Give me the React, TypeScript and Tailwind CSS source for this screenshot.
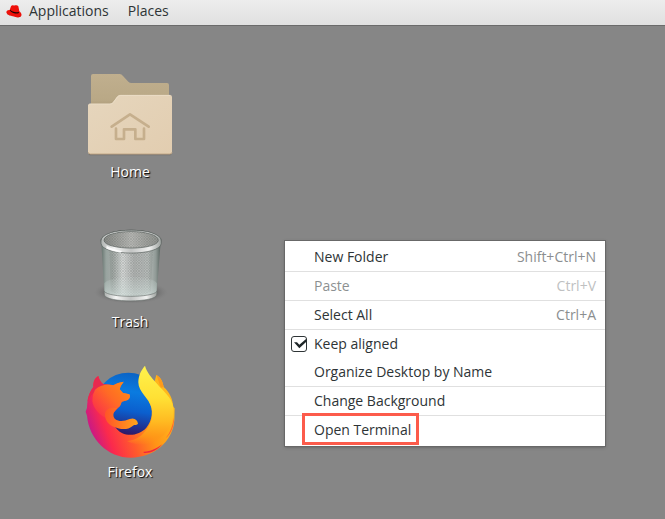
import { useState, type ReactNode } from "react";

function HatLogo() {
  return (
    <svg className="h-4 w-4" viewBox="0 0 48 48" aria-hidden="true">
      <path d="M1 27c1-5 6-7 10-6l4-11c2-4 6-4 9-2 4-2 11-1 13 2l3 15c5 4 8 9 6 13-3 6-14 6-25 2C11 37 1 34 1 27z" fill="#ee1009" />
      <path d="M12 22c2 7 18 13 27 8l-1-4c-7 4-21 0-25-6z" fill="#1c0503" />
      <path d="M3 31c9 9 29 15 42 7-5 6-16 5-25 2C10 38 4 35 3 31z" fill="#b80c08" />
    </svg>
  );
}

function FolderIcon() {
  return (
    <svg className="h-[100px] w-[110px]" viewBox="0 0 330 300" aria-hidden="true">
      <defs>
        <linearGradient id="folderBack" x1="0" y1="0" x2="0" y2="1">
          <stop offset="0" stopColor="#c0af8e" />
          <stop offset="0.7" stopColor="#b9a886" />
          <stop offset="1" stopColor="#a08e6c" />
        </linearGradient>
        <linearGradient id="folderFront" x1="0" y1="0" x2="1" y2="1">
          <stop offset="0" stopColor="#e6d6bd" />
          <stop offset="1" stopColor="#e2cdb0" />
        </linearGradient>
      </defs>
      <path d="M41 279h248v3q0 4-5 4H46q-5 0-5-4z" fill="#5f5d59" opacity=".6" />
      <path d="M48 48q0-6 6-6h80q6 0 10 6l16 17q4 4 9 4h107q6 0 6 6v80H48z" fill="url(#folderBack)" />
      <path d="M39 136q0-5 5-5h60q7 0 11-6l11-15q4-5 10-5h149q6 0 6 6v165q0 6-6 6H45q-6 0-6-6z" fill="url(#folderFront)" />
      <path d="M40 277q1 5 6 5h239q5 0 6-5" fill="none" stroke="#c3a887" strokeWidth="3" />
      <path d="M43 132h62q7 0 11-6l11-15q4-5 10-5h149" fill="none" stroke="#efe2cd" strokeWidth="2" />
      <path d="M110 200l55-37 56 37M123 206v31h24v-29h34v29h26v-31" fill="none" stroke="#c6af8d" strokeWidth="8" strokeLinecap="round" strokeLinejoin="round" />
    </svg>
  );
}

function TrashIcon() {
  return (
    <svg className="h-[100px] w-[110px]" viewBox="0 -15 330 300" aria-hidden="true">
      <defs>
        <linearGradient id="canBody">
          <stop offset="0" stopColor="#66736e" />
          <stop offset="0.08" stopColor="#98a39f" />
          <stop offset="0.2" stopColor="#a5aba8" />
          <stop offset="0.36" stopColor="#dcdedd" />
          <stop offset="0.55" stopColor="#b5b7b6" />
          <stop offset="0.78" stopColor="#bcc0be" />
          <stop offset="0.92" stopColor="#8f9995" />
          <stop offset="1" stopColor="#56615d" />
        </linearGradient>
        <linearGradient id="canInside">
          <stop offset="0" stopColor="#868884" />
          <stop offset="0.5" stopColor="#bcbcb9" />
          <stop offset="1" stopColor="#90928e" />
        </linearGradient>
        <linearGradient id="canRim">
          <stop offset="0" stopColor="#aeb2b0" />
          <stop offset="0.22" stopColor="#f4f5f4" />
          <stop offset="0.5" stopColor="#c3c5c4" />
          <stop offset="0.8" stopColor="#f0f1f0" />
          <stop offset="1" stopColor="#9ba09d" />
        </linearGradient>
        <radialGradient id="canShadow">
          <stop offset="0" stopColor="#3c3c3c" stopOpacity=".7" />
          <stop offset="0.7" stopColor="#4b4b4b" stopOpacity=".4" />
          <stop offset="1" stopColor="#777" stopOpacity="0" />
        </radialGradient>
        <linearGradient id="canFloor" x1="0" y1="0" x2="0" y2="1">
          <stop offset="0" stopColor="#cfdeda" stopOpacity=".1" />
          <stop offset="1" stopColor="#d4e3df" stopOpacity=".7" />
        </linearGradient>
        <pattern id="mesh" width="8" height="8" patternUnits="userSpaceOnUse">
          <path d="M0 0l8 8M8 0L0 8" stroke="#444a47" strokeWidth="1.4" opacity=".42" />
        </pattern>
      </defs>
      <ellipse cx="168" cy="232" rx="112" ry="34" fill="url(#canShadow)" />
      <path d="M79 82l9 153c2 29 154 30 157 0l12-153z" fill="url(#canBody)" />
      <path d="M103 92l4 136c30 20 99 20 121 0l6-136z" fill="url(#mesh)" />
      <path d="M88 205c18-24 142-26 158 0l-2 30c-20 24-138 24-155 0z" fill="url(#canFloor)" />
      <path d="M88 229c12 20 146 20 158 0l-1 11c-5 23-150 24-157 0z" fill="url(#canRim)" stroke="#69716e" strokeWidth="2" />
      <ellipse cx="168" cy="77" rx="91" ry="33" fill="#505652" />
      <ellipse cx="168" cy="76" rx="87" ry="30" fill="url(#canInside)" />
      <ellipse cx="168" cy="76" rx="84" ry="27" fill="url(#mesh)" />
      <path d="M78 78c0-43 181-43 181 0v7c-3 39-178 39-181 0zm9-2c2 31 161 31 163 0 0-35-163-35-163 0z" fill="url(#canRim)" fillRule="evenodd" stroke="#565d5a" strokeWidth="2" />
      <path d="M94 101q22 9 42 12l6-5q-29-4-47-16z" fill="#fff" opacity=".85" />
    </svg>
  );
}

function FirefoxIcon() {
  return (
    <svg className="h-[100px] w-[110px]" viewBox="0 15 330 300" aria-hidden="true">
      <defs>
        <linearGradient id="globe" x1="0.6" y1="0" x2="0.45" y2="1">
          <stop offset="0" stopColor="#0b62c4" />
          <stop offset="0.3" stopColor="#0a7be0" />
          <stop offset="0.6" stopColor="#0b5fce" />
          <stop offset="0.85" stopColor="#222f8c" />
          <stop offset="1" stopColor="#35125b" />
        </linearGradient>
        <linearGradient id="foxBody" gradientUnits="userSpaceOnUse" x1="280" y1="150" x2="45" y2="235">
          <stop offset="0" stopColor="#ffb81c" />
          <stop offset="0.3" stopColor="#ff9416" />
          <stop offset="0.55" stopColor="#ff5a2c" />
          <stop offset="0.8" stopColor="#fb2a4c" />
          <stop offset="1" stopColor="#c5188a" />
        </linearGradient>
        <linearGradient id="foxHead" x1="0.95" y1="0.1" x2="0.1" y2="0.8">
          <stop offset="0" stopColor="#ff8a18" />
          <stop offset="0.5" stopColor="#ff6a25" />
          <stop offset="1" stopColor="#fb3647" />
        </linearGradient>
        <linearGradient id="tail" gradientUnits="userSpaceOnUse" x1="225" y1="35" x2="225" y2="272">
          <stop offset="0" stopColor="#fff24c" />
          <stop offset="0.4" stopColor="#ffe034" />
          <stop offset="0.7" stopColor="#ffb921" />
          <stop offset="0.88" stopColor="#ff9a18" stopOpacity=".8" />
          <stop offset="1" stopColor="#ff8a18" stopOpacity="0" />
        </linearGradient>
        <linearGradient id="arm">
          <stop offset="0" stopColor="#ff5428" />
          <stop offset="1" stopColor="#ffa51a" />
        </linearGradient>
      </defs>
      <ellipse cx="160" cy="148" rx="98" ry="95" fill="url(#globe)" />
      <path d="M244 60C258 68 263 80 266 96C284 112 293 132 295 156L299 160L298 196C294 260 236 308 168 308C98 308 42 252 36 182L32 170L36 158C37 130 44 110 55 96C54 80 60 68 70 63C73 73 77 81 85 88Q100 87 115 91Q128 82 146 80Q136 92 134 103L144 114L163 118Q168 128 158 135L140 140Q137 154 128 160L112 178C108 198 120 225 142 235C166 245 196 238 214 218C232 196 236 164 222 140Z" fill="url(#foxBody)" />
      <path d="M70 63C60 68 54 80 55 96C46 108 40 120 37 140C52 112 72 94 100 90L85 88C77 81 73 73 70 63Z" fill="#e8294f" />
      <path d="M60 104Q82 84 115 91Q128 82 146 80Q136 92 134 103L144 114L163 118Q168 128 158 135L140 140Q137 154 125 160C104 158 92 172 96 190C74 182 54 158 52 138Q51 120 60 104Z" fill="url(#foxHead)" />
      <path d="M90 182C88 164 104 154 128 160C114 168 112 184 120 192C134 202 148 198 164 192C178 187 187 194 189 206C184 212 180 207 174 212C158 226 136 224 118 216C102 210 92 198 90 182Z" fill="url(#arm)" />
      <path d="M210 32C198 46 190 62 190 82C190 112 222 128 230 160C236 190 224 216 204 236C190 250 174 256 156 258C184 274 224 272 254 250C286 226 300 190 295 156C290 126 266 110 246 86C230 68 216 54 210 32Z" fill="url(#tail)" />
      <path d="M244 60C258 68 263 80 266 96L258 98C252 86 250 74 244 60Z" fill="#ff9a1a" />
      <path d="M206 290C222 291 244 282 262 268C246 286 226 296 206 294Z" fill="#f0263f" />
      <path d="M272 250C286 232 294 210 296 188C299 214 288 236 272 250Z" fill="#ff6830" />
    </svg>
  );
}

function Launcher({ name, children }: { name: string; children: ReactNode }) {
  return (
    <button type="button" className="flex w-28 flex-col items-center">
      {children}
      <span className="h-6 text-sm leading-6 text-white [text-shadow:1px_1px_1px_#000]">{name}</span>
    </button>
  );
}

function MenuItem({ label, shortcut, disabled, marked }: { label: string; shortcut?: string; disabled?: boolean; marked?: boolean }) {
  return (
    <button
      type="button"
      role="menuitem"
      disabled={disabled}
      className="flex h-7 w-full items-center justify-between pr-[9px] pl-[29px] text-[#2e3436] disabled:opacity-55"
    >
      <span className="relative flex h-7 items-center">
        {label}
        {marked && <span className="absolute -top-[3px] -right-2 -bottom-px -left-3 border-3 border-[#fc5b4b]" />}
      </span>
      {shortcut && <span className="text-[#8b8e8f]">{shortcut}</span>}
    </button>
  );
}

function Separator() {
  return <div role="separator" className="h-px bg-[#e0e0e0]" />;
}

function ContextMenu() {
  const [aligned, setAligned] = useState(true);
  return (
    <div
      role="menu"
      className="absolute top-[215px] left-[285px] w-80 bg-white py-[2px] text-sm shadow-[0_0_0_1px_#686868,0_1px_3px_#555]"
    >
      <MenuItem label="New Folder" shortcut="Shift+Ctrl+N" />
      <Separator />
      <MenuItem label="Paste" shortcut="Ctrl+V" disabled />
      <Separator />
      <MenuItem label="Select All" shortcut="Ctrl+A" />
      <Separator />
      <label className="flex h-7 items-center gap-[7px] pl-[6px] text-[#2e3436]">
        <span className="relative h-4 w-4">
          <input
            type="checkbox"
            checked={aligned}
            onChange={(e) => setAligned(e.target.checked)}
            className="block h-4 w-4 appearance-none rounded-[3px] border border-[#2e3436] bg-white"
          />
          {aligned && (
            <svg className="pointer-events-none absolute inset-0 h-4 w-4" viewBox="0 0 48 48" aria-hidden="true">
              <path d="M9 19h9l7 7L46 8v9L25 37z" fill="#1f2628" />
            </svg>
          )}
        </span>
        Keep aligned
      </label>
      <MenuItem label="Organize Desktop by Name" />
      <Separator />
      <MenuItem label="Change Background" />
      <Separator />
      <MenuItem label="Open Terminal" marked />
    </div>
  );
}

export default function App() {
  return (
    <div className="flex min-h-screen flex-col bg-[#868686] font-['Open_Sans','Noto_Sans',sans-serif]">
      <header className="flex h-[26px] items-center border-b border-[#6b6b6b] bg-linear-to-b from-[#ededed] to-[#e0e0e0] pb-[3px] pl-[6px] text-sm text-[#2e3436]">
        <button type="button" className="flex items-center gap-[7px] leading-5">
          <HatLogo />
          Applications
        </button>
        <button type="button" className="ml-[19px] leading-5">Places</button>
      </header>
      <main className="relative flex grow flex-col">
        <div className="flex flex-col items-start gap-[26px] pt-[34px] pl-[74px]">
          <Launcher name="Home"><FolderIcon /></Launcher>
          <Launcher name="Trash"><TrashIcon /></Launcher>
          <Launcher name="Firefox"><FirefoxIcon /></Launcher>
        </div>
        <ContextMenu />
      </main>
    </div>
  );
}
